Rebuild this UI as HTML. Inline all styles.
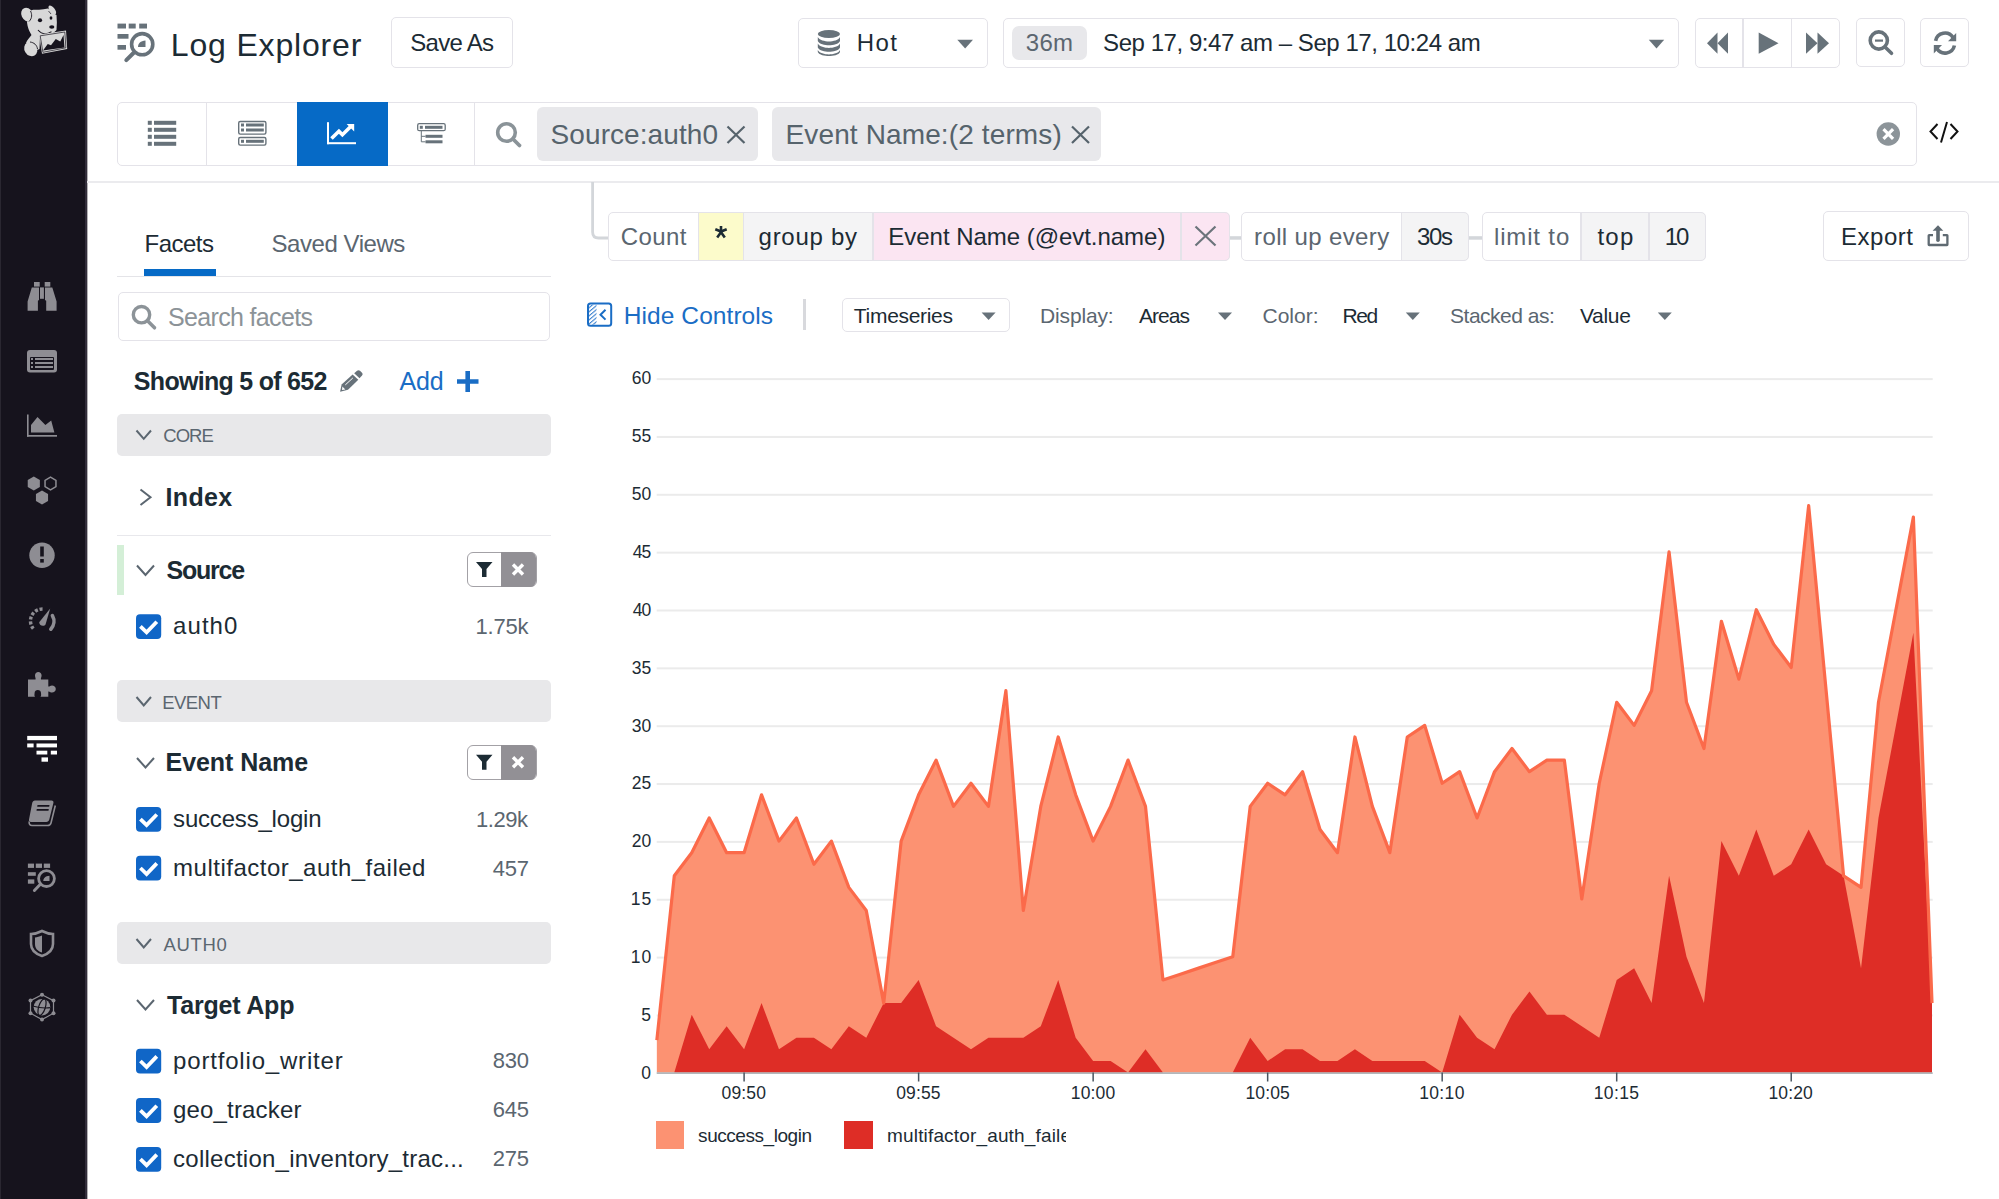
<!DOCTYPE html><html><head><meta charset="utf-8"><style>
html,body{margin:0;padding:0;}
body{width:1999px;height:1199px;position:relative;overflow:hidden;background:#fff;font-family:"Liberation Sans",sans-serif;}
.t{position:absolute;white-space:nowrap;}
.b{position:absolute;box-sizing:border-box;}
</style></head><body>
<div class="b" style="left:0px;top:0px;width:87px;height:1199px;background:#16131d;"></div>
<div class="b" style="left:85px;top:0px;width:2px;height:1199px;background:#322d3a;"></div>
<div class="b" style="left:87px;top:0px;width:1px;height:1199px;background:#b4b3b6;"></div>
<div class="b" style="left:0px;top:0px;width:1px;height:1199px;background:#2a2731;"></div>
<svg class="b" style="left:0;top:0" width="87" height="1199" viewBox="0 0 87 1199">
<g fill="#d8d8d8">
<path d="M31,10.5 C34,9.5 36,10 39,9.8 C42,9.5 45,9 48,8.5 C50,10 52,12 55.5,14.5 L56.5,15 C57,20 57,25 56.5,30 C55,32 53,33 50,34 L40,36 L39.5,49 C38,50 37,50 36,49 C34,45 30,43 26,43 C27,40 30,37 31.5,35 C29,31 27.5,27 27,22.5 C28,18 29,14 31,10.5 Z"/>
<ellipse cx="27" cy="14.5" rx="5.6" ry="7" transform="rotate(-25 27 14.5)"/>
<ellipse cx="52.3" cy="10" rx="2.6" ry="5.3" transform="rotate(-38 52.3 10)"/>
<ellipse cx="30.8" cy="49" rx="6.3" ry="7.5" transform="rotate(-30 30.8 49)"/>
</g>
<path d="M30.5,11 C32,14 32.5,18 29,21.5" stroke="#16131d" stroke-width="0.9" fill="none"/>
<path d="M48.5,11 L51,14" stroke="#16131d" stroke-width="0.7" fill="none"/>
<path d="M30,42 C34,42.5 37,45 37.5,49" stroke="#16131d" stroke-width="0.9" fill="none"/>
<ellipse cx="40" cy="20.3" rx="2.1" ry="2" fill="#16131d"/>
<ellipse cx="51" cy="18" rx="1.4" ry="1.7" fill="#16131d"/>
<ellipse cx="51.8" cy="27" rx="2.6" ry="1.7" fill="#16131d"/>
<path d="M38,30 C41,33.5 46,35 51.5,31.8" stroke="#16131d" stroke-width="1.1" fill="none"/>
<path d="M39,34.5 L66,30.5 L67.2,49 L42,53.8 Z" fill="#d8d8d8"/>
<path d="M40.2,35.8 L64.8,32 L65.9,47.8 L42.9,52.3 Z" fill="none" stroke="#16131d" stroke-width="0.7"/>
<path d="M43,50.5 L47.75,44 L51,45.25 L55.75,39 L60.25,41.5 L63.5,35 L64.5,47.5 Z" fill="#16131d"/>

<g fill="#8e8d93">
<rect x="34" y="282" width="5.7" height="4.6"/><rect x="44.7" y="282" width="5.6" height="4.6"/>
<path d="M31.8,287.4 L39,287.4 L39,300 L37.9,300.8 L37.9,310.8 L27.6,310.8 L27.6,301.5 Z"/>
<path d="M45,287.4 L52.3,287.4 L56.6,301.5 L56.6,310.8 L46.2,310.8 L46.2,300.8 L45,300 Z"/>
<rect x="40" y="287.4" width="3.9" height="11.4"/>
</g>
<rect x="27" y="350" width="30" height="22.5" rx="3" fill="#8e8d93"/>
<g fill="#16131d"><rect x="30" y="357" width="24" height="13" rx="1"/></g>
<g fill="#8e8d93"><rect x="31" y="358" width="2" height="2"/><rect x="31" y="362" width="2" height="2"/><rect x="31" y="366" width="2" height="2"/>
<rect x="35" y="358" width="18" height="2"/><rect x="35" y="362" width="18" height="2"/><rect x="35" y="366" width="18" height="2"/></g>
<g fill="#8e8d93"><rect x="27" y="414.5" width="1.6" height="22.2"/><rect x="27" y="435" width="30" height="1.7"/>
<path d="M31,432.6 L31,425 L37.5,417 L45.4,425 L51.2,420.4 L54.4,432.6 Z"/></g>
<polygon points="39.86,487.00 33.80,490.50 27.74,487.00 27.74,480.00 33.80,476.50 39.86,480.00" fill="#8e8d93"/>
<polygon points="48.06,501.00 42.00,504.50 35.94,501.00 35.94,494.00 42.00,490.50 48.06,494.00" fill="#8e8d93"/>
<polygon points="55.96,486.65 50.50,489.80 45.04,486.65 45.04,480.35 50.50,477.20 55.96,480.35" fill="none" stroke="#8e8d93" stroke-width="1.5"/>
<circle cx="42" cy="555.2" r="12.7" fill="#8e8d93"/><rect x="40.2" y="546.5" width="3.6" height="10" fill="#16131d"/><rect x="40.2" y="559" width="3.6" height="3.6" fill="#16131d"/>
<path d="M33.3,628.7 A12,12 0 0 1 43.5,609" fill="none" stroke="#8e8d93" stroke-width="3.4" stroke-dasharray="3 1.8"/>
<path d="M52.4,615.6 A11.5,11.5 0 0 1 50.8,629.2" fill="none" stroke="#8e8d93" stroke-width="3.6" stroke-linecap="round"/>
<path d="M39.2,622.3 L50.2,608.4 L45.6,624.2 C44.6,626.8 39.2,626.3 39.2,622.3 Z" fill="#8e8d93"/>
<path fill="#8e8d93" d="M28,679.5 L35.5,679.5 C36,678 35,677.5 35,675.5 C35,673.5 36.5,672 38.3,672 C40.1,672 41.6,673.5 41.6,675.5 C41.6,677.5 40.5,678 41,679.5 L48.3,679.5 L48.3,686.5 C49.5,687 50,685.5 52,685.5 C54,685.5 55.8,687 55.8,689 C55.8,691 54,692.5 52,692.5 C50,692.5 49.5,691 48.3,691.5 L48.3,696.7 L40.5,696.7 C41.5,695.5 41,694.5 41,693 C41,691.3 39.6,690 37.8,690 C36,690 34.6,691.3 34.6,693 C34.6,694.5 34,695.5 35,696.7 L28,696.7 Z"/>
<g fill="#ffffff"><rect x="27.2" y="735.9" width="29.8" height="4.3"/>
<rect x="27.2" y="743.5" width="6.4" height="3.9"/><rect x="36.5" y="743.5" width="20.5" height="3.9"/>
<rect x="36.5" y="750.7" width="10.8" height="3.8"/><rect x="50.8" y="750.7" width="6.2" height="3.8"/>
<rect x="41.5" y="757.4" width="6.5" height="4.3"/></g>
<path fill="#8e8d93" d="M35,800.5 L51.5,800.5 C53,800.5 53.8,801.5 53.4,803 L49.3,819.5 C48.9,821 47.8,822 46.3,822 L31,822 C29.5,822 28.6,821 29,819.5 L32.2,803 C32.6,801.5 33.5,800.5 35,800.5 Z"/>
<path d="M29.2,821.5 C28.8,824 30,825.5 32,825.5 L47.5,825.5 C49.5,825.5 50.6,824.5 51,823 L55.3,805.5" fill="none" stroke="#8e8d93" stroke-width="1.6"/>
<rect x="37.3" y="805" width="12" height="1.7" fill="#16131d" transform="skewX(-10)" transform-origin="43 806"/><rect x="36.6" y="809" width="12" height="1.7" fill="#16131d" transform="skewX(-10)" transform-origin="42.6 810"/>
<g fill="#8e8d93"><rect x="27.9" y="863.6" width="6.1" height="4.3"/><rect x="35.8" y="863.6" width="6.2" height="4.3"/><rect x="43.8" y="863.6" width="6.3" height="4.3"/>
<rect x="27.9" y="872.2" width="7.9" height="3.6"/><rect x="27.9" y="879.4" width="6.4" height="4.3"/></g>
<circle cx="46.5" cy="878.6" r="7.9" fill="none" stroke="#8e8d93" stroke-width="2.8"/>
<path d="M40.6,884 L34.4,890.5" stroke="#8e8d93" stroke-width="3" stroke-linecap="round"/>
<path d="M43.3,881 C43.3,878.2 45.3,876 49.5,875.7 L49.5,881 Z" fill="#8e8d93"/>
<path d="M42,931 C38,933 34,934 31,934 L31,944 C31,950 36,954 42,956 C48,954 53,950 53,944 L53,934 C50,934 46,933 42,931 Z" fill="none" stroke="#8e8d93" stroke-width="2.6"/>
<path d="M42,935.5 C39.5,936.5 37,937.3 35,937.5 L35,944 C35,948.5 37.5,951 42,952.6 Z" fill="#8e8d93"/>
<polygon points="42,994.7 53.5,1000.6 53.5,1013.2 42,1019.6 30.5,1013.2 30.5,1000.6" fill="none" stroke="#8e8d93" stroke-width="1.2"/>
<g fill="#8e8d93"><circle cx="42" cy="994.7" r="2"/><circle cx="42" cy="1019.6" r="2"/><circle cx="30.5" cy="1000.6" r="2"/><circle cx="53.5" cy="1000.6" r="2"/><circle cx="30.5" cy="1013.2" r="2"/><circle cx="53.5" cy="1013.2" r="2"/></g>
<circle cx="42" cy="1007.2" r="9.9" fill="#16131d"/>
<circle cx="42" cy="1007.2" r="8.3" fill="#8e8d93"/>
<ellipse cx="42" cy="1007.2" rx="3.3" ry="8.6" fill="none" stroke="#16131d" stroke-width="1.2" transform="rotate(18 42 1007.2)"/>
<path d="M33.5,1006.2 Q42,1008.8 50.5,1007.6" fill="none" stroke="#16131d" stroke-width="1.2"/>
</svg>
<svg class="b" style="left:0;top:0" width="200" height="80" viewBox="0 0 200 80">
<g fill="#67727a"><rect x="117.5" y="23.6" width="8.5" height="4.9"/><rect x="128.7" y="23.6" width="7" height="4.9"/><rect x="139.2" y="23.6" width="7.8" height="4.9"/>
<rect x="117.5" y="34" width="11" height="4.7"/><rect x="117.5" y="45" width="8.5" height="4.7"/></g>
<circle cx="142.2" cy="44.2" r="10.6" fill="none" stroke="#67727a" stroke-width="3.6"/>
<path d="M133.5,53 L126.3,60.2" stroke="#67727a" stroke-width="4" stroke-linecap="round"/>
<path d="M138,47 C138,43.5 140.5,41 145.5,40.6 L145.5,47 Z" fill="#67727a"/>
</svg>
<div class="t" style="left:170.82px;top:28.51px;font-size:32px;line-height:32px;color:#1c2b34;letter-spacing:0.829px;">Log Explorer</div>
<div class="b" style="left:391px;top:17.4px;width:122.3px;height:50.2px;border:1.5px solid #e4e3e9;border-radius:5px;"></div>
<div class="t" style="left:410.34px;top:31.38px;font-size:24px;line-height:24px;color:#1c2b34;letter-spacing:-0.733px;">Save As</div>
<div class="b" style="left:798.3px;top:17.5px;width:189.8px;height:50px;border:1.5px solid #e4e3e9;border-radius:5px;"></div>
<svg class="b" style="left:810px;top:25px" width="40" height="36" viewBox="810 25 40 36">
<g fill="#67727a">
<ellipse cx="828.9" cy="34" rx="11.1" ry="4"/>
<path d="M817.8,37 C819,40 825,41.5 828.9,41.5 C833,41.5 839,40 840,37 L840,41 C839,44 833,45.3 828.9,45.3 C825,45.3 819,44 817.8,41 Z"/>
<path d="M817.8,43.6 C819,46.6 825,48 828.9,48 C833,48 839,46.6 840,43.6 L840,47.5 C839,50.5 833,51.8 828.9,51.8 C825,51.8 819,50.5 817.8,47.5 Z"/>
<path d="M817.8,50 C819,53 825,54.4 828.9,54.4 C833,54.4 839,53 840,50 L840,52 C839,55 833,56 828.9,56 C825,56 819,55 817.8,52 Z"/>
</g></svg>
<div class="t" style="left:856.82px;top:31.48px;font-size:24px;line-height:24px;color:#1c2b34;letter-spacing:1.430px;">Hot</div>
<svg class="b" style="left:950px;top:35px" width="30" height="20" viewBox="950 35 30 20"><path d="M957.3,39.7 L973,39.7 L965.15,48.5 Z" fill="#67727a"/></svg>
<div class="b" style="left:1003.3px;top:17.5px;width:676.1px;height:50px;border:1.5px solid #e4e3e9;border-radius:5px;"></div>
<div class="b" style="left:1012.3px;top:26px;width:74.6px;height:34.3px;background:#e8e8eb;border-radius:7px;"></div>
<div class="t" style="left:1025.86px;top:31.48px;font-size:24px;line-height:24px;color:#5b6670;letter-spacing:0.180px;">36m</div>
<div class="t" style="left:1103.10px;top:31.48px;font-size:24px;line-height:24px;color:#1c2b34;letter-spacing:-0.446px;">Sep 17, 9:47 am – Sep 17, 10:24 am</div>
<svg class="b" style="left:1640px;top:35px" width="30" height="20" viewBox="1640 35 30 20"><path d="M1648.8,39.7 L1664.2,39.7 L1656.5,48.5 Z" fill="#67727a"/></svg>
<div class="b" style="left:1694.5px;top:17.5px;width:145.6px;height:50px;border:1.5px solid #e4e3e9;border-radius:5px;"></div>
<div class="b" style="left:1742.2px;top:17.5px;width:1.8px;height:50px;background:#e4e3e9;"></div>
<div class="b" style="left:1790.6px;top:17.5px;width:1.8px;height:50px;background:#e4e3e9;"></div>
<svg class="b" style="left:1690px;top:20px" width="300" height="45" viewBox="1690 20 300 45">
<g fill="#67727a">
<path d="M1707,43.2 L1717.5,32.6 L1717.5,53.7 Z"/><path d="M1717.5,43.2 L1728,32.6 L1728,53.7 Z"/>
<path d="M1758.7,32.6 L1778.5,43.2 L1758.7,53.7 Z"/>
<path d="M1806,32.6 L1817.5,43.2 L1806,53.7 Z"/><path d="M1817.5,32.6 L1829,43.2 L1817.5,53.7 Z"/>
</g>
<circle cx="1878.8" cy="40.5" r="8.6" fill="none" stroke="#67727a" stroke-width="3.6"/>
<path d="M1875,40.6 L1883,40.6" stroke="#67727a" stroke-width="2.2"/>
<path d="M1885,47 L1891.5,53.3" stroke="#67727a" stroke-width="3.6" stroke-linecap="round"/>
<path d="M1935.6,40.8 A9.5,9.5 0 0 1 1953,37.5" fill="none" stroke="#67727a" stroke-width="3.6"/>
<path d="M1956.2,33 L1956.2,41.3 L1948,41.3 Z" fill="#67727a"/>
<path d="M1954.4,45.5 A9.5,9.5 0 0 1 1937,48.5" fill="none" stroke="#67727a" stroke-width="3.6"/>
<path d="M1933.8,53.5 L1933.8,45 L1942,45 Z" fill="#67727a"/>
</svg>
<div class="b" style="left:1855.8px;top:17.6px;width:49.4px;height:49.9px;border:1.5px solid #e4e3e9;border-radius:5px;"></div>
<div class="b" style="left:1920.3px;top:17.6px;width:49px;height:49.9px;border:1.5px solid #e4e3e9;border-radius:5px;"></div>
<div class="b" style="left:117.2px;top:101.8px;width:1800.3px;height:63.9px;border:1.5px solid #e4e3e9;border-radius:5px;"></div>
<div class="b" style="left:205.6px;top:101.8px;width:1.8px;height:63.9px;background:#e4e3e9;"></div>
<div class="b" style="left:296.5px;top:101.8px;width:91.2px;height:63.9px;background:#066ac6;"></div>
<div class="b" style="left:473.6px;top:101.8px;width:1.8px;height:63.9px;background:#e4e3e9;"></div>
<svg class="b" style="left:140px;top:110px" width="400" height="45" viewBox="140 110 400 45">
<g fill="#67727a">
<rect x="147.8" y="120.8" width="4" height="4"/><rect x="154" y="120.8" width="22.2" height="4"/>
<rect x="147.8" y="127.8" width="4" height="4"/><rect x="154" y="127.8" width="22.2" height="4"/>
<rect x="147.8" y="134.8" width="4" height="4"/><rect x="154" y="134.8" width="22.2" height="4"/>
<rect x="147.8" y="141.8" width="4" height="4"/><rect x="154" y="141.8" width="22.2" height="4"/>
</g>
<rect x="238.7" y="121.5" width="27.2" height="12.6" rx="1.5" fill="none" stroke="#67727a" stroke-width="1.4"/>
<rect x="238.7" y="137.5" width="27.2" height="7.6" rx="1.5" fill="none" stroke="#67727a" stroke-width="1.4"/>
<g fill="#67727a"><rect x="241" y="123.5" width="3" height="3"/><rect x="246" y="123.5" width="17.8" height="3"/>
<rect x="241" y="128.5" width="3" height="3"/><rect x="246" y="128.5" width="17.8" height="3"/>
<rect x="241" y="139.8" width="3" height="3"/><rect x="246" y="139.8" width="17.8" height="3"/></g>
<g fill="#fff"><rect x="327" y="122.2" width="2" height="22"/><rect x="327" y="142.2" width="29" height="2"/>
</g><path d="M331.5,138.6 L338.9,131.2 L342.4,134.8 L350.5,126.8" fill="none" stroke="#fff" stroke-width="3.6"/><path d="M346.6,124 L354.2,124 L354.2,131.6 Z" fill="#fff"/>
<rect x="417.7" y="123.7" width="27.5" height="7" rx="1.5" fill="none" stroke="#67727a" stroke-width="1.3"/>
<g fill="#67727a"><rect x="419.8" y="125.8" width="3" height="3"/><rect x="425" y="125.8" width="17.5" height="3"/>
<rect x="425.5" y="134.8" width="17" height="3"/><rect x="425.5" y="140.3" width="17" height="3"/></g>
<path d="M421.3,131 L421.3,141.8 L425.5,141.8 M421.3,136.3 L425.5,136.3" fill="none" stroke="#67727a" stroke-width="1"/>
<circle cx="506.5" cy="132.5" r="8.8" fill="none" stroke="#8a9398" stroke-width="3.6"/>
<path d="M513,139 L519.5,145.5" stroke="#8a9398" stroke-width="3.8" stroke-linecap="round"/>
</svg>
<div class="b" style="left:536.5px;top:106.7px;width:221.4px;height:54px;background:#e8e8eb;border-radius:6px;"></div>
<div class="t" style="left:550.60px;top:120.60px;font-size:28px;line-height:28px;color:#56636c;letter-spacing:0.075px;">Source:auth0</div>
<div class="b" style="left:772.2px;top:106.7px;width:329.1px;height:54px;background:#e8e8eb;border-radius:6px;"></div>
<div class="t" style="left:785.56px;top:120.60px;font-size:28px;line-height:28px;color:#56636c;letter-spacing:0.125px;">Event Name:(2 terms)</div>
<svg class="b" style="left:700px;top:110px" width="1300" height="45" viewBox="700 110 1300 45">
<path d="M727.5,126.5 L744.5,143 M744.5,126.5 L727.5,143" stroke="#56636c" stroke-width="2.2"/>
<path d="M1072,126.5 L1089,143 M1089,126.5 L1072,143" stroke="#56636c" stroke-width="2.2"/>
<circle cx="1888.3" cy="134" r="11.7" fill="#8c9499"/>
<path d="M1883.5,129.2 L1893.1,138.8 M1893.1,129.2 L1883.5,138.8" stroke="#fff" stroke-width="3.2"/>
<path d="M1937.5,124 L1930.5,131.5 L1937.5,139 M1950.5,124 L1957.5,131.5 L1950.5,139 M1947,122 L1941,142.5" fill="none" stroke="#111" stroke-width="2"/>
</svg>
<div class="b" style="left:87px;top:180.8px;width:1912px;height:1.9px;background:#ebebee;"></div>
<div class="t" style="left:144.58px;top:231.58px;font-size:24px;line-height:24px;color:#1c2b34;letter-spacing:-0.540px;">Facets</div>
<div class="t" style="left:271.48px;top:231.58px;font-size:24px;line-height:24px;color:#5b6670;letter-spacing:-0.446px;">Saved Views</div>
<div class="b" style="left:117px;top:275.5px;width:433.7px;height:1.6px;background:#e4e4e8;"></div>
<div class="b" style="left:143.8px;top:269.2px;width:72.3px;height:6.8px;background:#066ac6;"></div>
<div class="b" style="left:117.6px;top:291.6px;width:432.8px;height:49.6px;border:1.5px solid #e4e3e9;border-radius:5px;"></div>
<div class="t" style="left:167.98px;top:304.94px;font-size:25px;line-height:25px;color:#8c9398;letter-spacing:-0.655px;">Search facets</div>
<div class="t" style="left:133.86px;top:369.34px;font-size:25px;line-height:25px;color:#1c2b34;font-weight:bold;letter-spacing:-0.714px;">Showing 5 of 652</div>
<div class="t" style="left:399.62px;top:369.34px;font-size:25px;line-height:25px;color:#1a6dc5;letter-spacing:-0.170px;">Add</div>
<div class="b" style="left:117px;top:413.5px;width:433.7px;height:42.6px;background:#e8e8ea;border-radius:5px;"></div>
<div class="t" style="left:163.24px;top:427.44px;font-size:18.5px;line-height:18.5px;color:#5b6670;letter-spacing:-0.942px;">CORE</div>
<div class="t" style="left:165.58px;top:484.84px;font-size:25px;line-height:25px;color:#1c2b34;font-weight:bold;letter-spacing:0.292px;">Index</div>
<div class="b" style="left:117px;top:534.6px;width:433.7px;height:1.8px;background:#e8e8ec;"></div>
<div class="b" style="left:117px;top:544.5px;width:7px;height:50.1px;background:#d4efd7;"></div>
<div class="t" style="left:166.48px;top:557.74px;font-size:25px;line-height:25px;color:#1c2b34;font-weight:bold;letter-spacing:-1.218px;">Source</div>
<div class="b" style="left:466.7px;top:552px;width:70px;height:35.1px;border:1.5px solid #a3a1a6;border-radius:6px;background:#fff;"></div>
<div class="b" style="left:500.6px;top:552px;width:35.7px;height:35.1px;background:#929095;border-radius:0 6px 6px 0;"></div>
<div class="t" style="left:173.10px;top:613.88px;font-size:24px;line-height:24px;color:#1c2b34;letter-spacing:1.045px;">auth0</div>
<div class="t" style="left:475.58px;top:615.58px;font-size:22px;line-height:22px;color:#5b6670;letter-spacing:-0.215px;">1.75k</div>
<div class="b" style="left:117px;top:680.2px;width:433.7px;height:42.3px;background:#e8e8ea;border-radius:5px;"></div>
<div class="t" style="left:162.34px;top:694.34px;font-size:18.5px;line-height:18.5px;color:#5b6670;letter-spacing:-0.574px;">EVENT</div>
<div class="t" style="left:165.58px;top:750.44px;font-size:25px;line-height:25px;color:#1c2b34;font-weight:bold;letter-spacing:-0.063px;">Event Name</div>
<div class="b" style="left:466.7px;top:744.7px;width:70px;height:35.3px;border:1.5px solid #a3a1a6;border-radius:6px;background:#fff;"></div>
<div class="b" style="left:500.6px;top:744.7px;width:35.7px;height:35.3px;background:#929095;border-radius:0 6px 6px 0;"></div>
<div class="t" style="left:173.10px;top:806.98px;font-size:24px;line-height:24px;color:#1c2b34;letter-spacing:-0.192px;">success_login</div>
<div class="t" style="left:476.10px;top:808.68px;font-size:22px;line-height:22px;color:#5b6670;letter-spacing:-0.470px;">1.29k</div>
<div class="t" style="left:173.10px;top:855.88px;font-size:24px;line-height:24px;color:#1c2b34;letter-spacing:0.494px;">multifactor_auth_failed</div>
<div class="t" style="left:492.86px;top:857.58px;font-size:22px;line-height:22px;color:#5b6670;letter-spacing:-0.290px;">457</div>
<div class="b" style="left:117px;top:921.9px;width:433.7px;height:42.2px;background:#e8e8ea;border-radius:5px;"></div>
<div class="t" style="left:163.38px;top:935.84px;font-size:18.5px;line-height:18.5px;color:#5b6670;letter-spacing:0.675px;">AUTH0</div>
<div class="t" style="left:167.00px;top:992.74px;font-size:25px;line-height:25px;color:#1c2b34;font-weight:bold;letter-spacing:-0.192px;">Target App</div>
<div class="t" style="left:173.10px;top:1048.68px;font-size:24px;line-height:24px;color:#1c2b34;letter-spacing:0.815px;">portfolio_writer</div>
<div class="t" style="left:492.86px;top:1050.38px;font-size:22px;line-height:22px;color:#5b6670;letter-spacing:-0.290px;">830</div>
<div class="t" style="left:173.10px;top:1097.68px;font-size:24px;line-height:24px;color:#1c2b34;letter-spacing:0.156px;">geo_tracker</div>
<div class="t" style="left:492.86px;top:1099.38px;font-size:22px;line-height:22px;color:#5b6670;letter-spacing:-0.290px;">645</div>
<div class="t" style="left:173.10px;top:1146.68px;font-size:24px;line-height:24px;color:#1c2b34;letter-spacing:0.242px;">collection_inventory_trac...</div>
<div class="t" style="left:492.86px;top:1148.38px;font-size:22px;line-height:22px;color:#5b6670;letter-spacing:-0.290px;">275</div>
<svg class="b" style="left:0;top:0" width="600" height="1199" viewBox="0 0 600 1199">
<circle cx="141.5" cy="314.7" r="8.2" fill="none" stroke="#8c9398" stroke-width="3.4"/><path d="M147.5,320.8 L154.5,327.8" stroke="#8c9398" stroke-width="3.6" stroke-linecap="round"/>
<path d="M340.1,391.8 L341.6,384.6 L352.6,374.6 L358.3,379.8 L348,389.8 Z" fill="#67727a"/><path d="M354.2,373.3 L357,370.8 C358,370 359,370 360,370.8 L362,372.7 C362.8,373.6 362.8,374.6 362,375.5 L359.5,378.2 Z" fill="#67727a"/><path d="M345.3,384.9 L352.8,378" stroke="#fff" stroke-width="1"/><path d="M342.4,386.4 L342,390 L345.3,389.6 Z" fill="#fff"/>
<path d="M467.7,371 L467.7,392 M457,381.5 L478.5,381.5" stroke="#1a6dc5" stroke-width="4.6"/>
<path d="M136.5,430.5 L143.75,438.8 L151,430.5" fill="none" stroke="#5b6670" stroke-width="2"/>
<path d="M140.5,489.5 L150.5,497.3 L140.5,505" fill="none" stroke="#5b6670" stroke-width="2"/>
<path d="M137,565.5 L145.5,575 L154,565.5" fill="none" stroke="#5b6670" stroke-width="2"/>
<path d="M136.5,697 L143.75,705.5 L151,697" fill="none" stroke="#5b6670" stroke-width="2"/>
<path d="M137,758 L145.5,767.5 L154,758" fill="none" stroke="#5b6670" stroke-width="2"/>
<path d="M136.5,939 L143.75,947.5 L151,939" fill="none" stroke="#5b6670" stroke-width="2"/>
<path d="M137,1000 L145.5,1009.5 L154,1000" fill="none" stroke="#5b6670" stroke-width="2"/>
<path d="M476,562.0 L492.5,562.0 L486.5,569.0 L486.5,577.0 L482,577.0 L482,569.0 Z" fill="#1c2b34"/>
<path d="M513,564.5 L523,574.5 M523,564.5 L513,574.5" stroke="#fff" stroke-width="3.4"/>
<path d="M476,754.8 L492.5,754.8 L486.5,761.8 L486.5,769.8 L482,769.8 L482,761.8 Z" fill="#1c2b34"/>
<path d="M513,757.3 L523,767.3 M523,757.3 L513,767.3" stroke="#fff" stroke-width="3.4"/>
<rect x="136.0" y="614.2" width="25.2" height="24.8" rx="4" fill="#1066c7"/><path d="M140.4,626.4 L146.6,632.4 L156.8,621.8" fill="none" stroke="#fff" stroke-width="3.8"/>
<rect x="136.0" y="806.9" width="25.2" height="24.8" rx="4" fill="#1066c7"/><path d="M140.4,819.1 L146.6,825.1 L156.8,814.5" fill="none" stroke="#fff" stroke-width="3.8"/>
<rect x="136.0" y="855.8" width="25.2" height="24.8" rx="4" fill="#1066c7"/><path d="M140.4,868.0 L146.6,874.0 L156.8,863.4" fill="none" stroke="#fff" stroke-width="3.8"/>
<rect x="136.0" y="1048.8" width="25.2" height="24.8" rx="4" fill="#1066c7"/><path d="M140.4,1061.0 L146.6,1067.0 L156.8,1056.4" fill="none" stroke="#fff" stroke-width="3.8"/>
<rect x="136.0" y="1098.1" width="25.2" height="24.8" rx="4" fill="#1066c7"/><path d="M140.4,1110.3 L146.6,1116.3 L156.8,1105.7" fill="none" stroke="#fff" stroke-width="3.8"/>
<rect x="136.0" y="1147.0" width="25.2" height="24.8" rx="4" fill="#1066c7"/><path d="M140.4,1159.2 L146.6,1165.2 L156.8,1154.6" fill="none" stroke="#fff" stroke-width="3.8"/>
</svg>
<svg class="b" style="left:0;top:0" width="1999" height="400" viewBox="0 0 1999 400">
<path d="M592.6,182 L592.6,232 Q592.6,238 598.6,238 L609,238" fill="none" stroke="#d3d6da" stroke-width="2.8"/>
<rect x="1229" y="236.2" width="13" height="3.5" fill="#d3d6da"/>
<rect x="1468" y="236.2" width="14" height="3.5" fill="#d3d6da"/>
</svg>
<div class="b" style="left:608.3px;top:211.5px;width:621.9px;height:49.5px;background:#fff;border-radius:7px;"></div>
<div class="b" style="left:698.3px;top:211.5px;width:45.5px;height:49.5px;background:#fcfbcb;"></div>
<div class="b" style="left:743.3px;top:211.5px;width:130px;height:49.5px;background:#f4f4f5;"></div>
<div class="b" style="left:873px;top:211.5px;width:357.2px;height:49.5px;background:#fbe5f2;border-radius:0 5px 5px 0;"></div>
<div class="b" style="left:608.3px;top:211.5px;width:621.9px;height:49.5px;border:1.5px solid #e4e3e9;border-radius:5px;"></div>
<div class="b" style="left:697.5px;top:211.5px;width:1.8px;height:49.5px;background:#e4e3e9;"></div>
<div class="b" style="left:742.5px;top:211.5px;width:1.8px;height:49.5px;background:#e4e3e9;"></div>
<div class="b" style="left:872.2px;top:211.5px;width:1.8px;height:49.5px;background:#e4e3e9;"></div>
<div class="b" style="left:1180px;top:211.5px;width:1.8px;height:49.5px;background:#e4e3e9;"></div>
<div class="t" style="left:620.72px;top:225.18px;font-size:24px;line-height:24px;color:#5b6670;letter-spacing:0.425px;">Count</div>
<div class="t" style="left:758.60px;top:225.18px;font-size:24px;line-height:24px;color:#1c2b34;letter-spacing:0.720px;">group by</div>
<div class="t" style="left:888.34px;top:225.18px;font-size:24px;line-height:24px;color:#1c2b34;letter-spacing:-0.035px;">Event Name (@evt.name)</div>
<div class="b" style="left:1401.4px;top:211.5px;width:67.9px;height:49.5px;background:#f4f4f5;border-radius:0 5px 5px 0;"></div>
<div class="b" style="left:1241.4px;top:211.5px;width:227.9px;height:49.5px;border:1.5px solid #e4e3e9;border-radius:5px;"></div>
<div class="b" style="left:1400.6px;top:211.5px;width:1.8px;height:49.5px;background:#e4e3e9;"></div>
<div class="t" style="left:1254.10px;top:225.18px;font-size:24px;line-height:24px;color:#5b6670;letter-spacing:0.362px;">roll up every</div>
<div class="t" style="left:1417.12px;top:225.18px;font-size:24px;line-height:24px;color:#1c2b34;letter-spacing:-1.440px;">30s</div>
<div class="b" style="left:1581.2px;top:211.5px;width:124.8px;height:49.5px;background:#f4f4f5;border-radius:0 5px 5px 0;"></div>
<div class="b" style="left:1481.7px;top:211.5px;width:224.3px;height:49.5px;border:1.5px solid #e4e3e9;border-radius:5px;"></div>
<div class="b" style="left:1580.4px;top:211.5px;width:1.8px;height:49.5px;background:#e4e3e9;"></div>
<div class="b" style="left:1648.4px;top:211.5px;width:1.8px;height:49.5px;background:#e4e3e9;"></div>
<div class="t" style="left:1493.98px;top:225.18px;font-size:24px;line-height:24px;color:#5b6670;letter-spacing:0.846px;">limit to</div>
<div class="t" style="left:1597.50px;top:225.18px;font-size:24px;line-height:24px;color:#1c2b34;letter-spacing:1.200px;">top</div>
<div class="t" style="left:1664.72px;top:225.18px;font-size:24px;line-height:24px;color:#1c2b34;letter-spacing:-1.980px;">10</div>
<div class="b" style="left:1822.7px;top:211.2px;width:146.7px;height:49.9px;border:1.5px solid #e4e3e9;border-radius:5px;"></div>
<div class="t" style="left:1841.08px;top:225.18px;font-size:24px;line-height:24px;color:#1c2b34;letter-spacing:0.484px;">Export</div>
<div class="b" style="left:803.1px;top:299.1px;width:2.8px;height:30.9px;background:#d8d9dd;"></div>
<div class="b" style="left:842.4px;top:297.6px;width:167.2px;height:34.8px;border:1.6px solid #e4e3e9;border-radius:5px;"></div>
<div class="t" style="left:623.84px;top:303.76px;font-size:24.5px;line-height:24.5px;color:#1a6dc5;letter-spacing:0.069px;">Hide Controls</div>
<div class="t" style="left:853.86px;top:304.72px;font-size:21px;line-height:21px;color:#1c2b34;letter-spacing:-0.313px;">Timeseries</div>
<div class="t" style="left:1040.10px;top:304.72px;font-size:21px;line-height:21px;color:#5b6670;letter-spacing:-0.156px;">Display:</div>
<div class="t" style="left:1139.00px;top:304.72px;font-size:21px;line-height:21px;color:#1c2b34;letter-spacing:-0.952px;">Areas</div>
<div class="t" style="left:1262.48px;top:304.72px;font-size:21px;line-height:21px;color:#5b6670;">Color:</div>
<div class="t" style="left:1342.46px;top:304.72px;font-size:21px;line-height:21px;color:#1c2b34;letter-spacing:-1.367px;">Red</div>
<div class="t" style="left:1450.10px;top:304.72px;font-size:21px;line-height:21px;color:#5b6670;letter-spacing:-0.504px;">Stacked as:</div>
<div class="t" style="left:1579.88px;top:304.72px;font-size:21px;line-height:21px;color:#1c2b34;letter-spacing:-0.291px;">Value</div>
<svg class="b" style="left:0;top:0" width="1999" height="400" viewBox="0 0 1999 400">
<g stroke="#1c2b34" stroke-width="2.6" stroke-linecap="butt"><path d="M721,226 L721,233"/><path d="M715.3,229.2 L721,231.5 L726.7,229.2" fill="none"/><path d="M717.2,237.5 L721,232.2 L724.8,237.5" fill="none"/></g>
<path d="M1195.5,226.5 L1215.5,245.5 M1215.5,226.5 L1195.5,245.5" stroke="#6b747b" stroke-width="2.2"/>
<path d="M1933,235.1 L1929.2,235.1 Q1928.7,235.1 1928.7,235.6 L1928.7,244.6 Q1928.7,245 1929.2,245 L1947,245 Q1947.4,245 1947.4,244.6 L1947.4,235.6 Q1947.4,235.1 1947,235.1 L1942.8,235.1" fill="none" stroke="#5f6a72" stroke-width="2.3"/>
<path d="M1938,240.2 L1938,230" stroke="#5f6a72" stroke-width="3.6" stroke-linecap="round"/><path d="M1932.6,230.8 L1938,225.2 L1943.3,230.8 Z" fill="#5f6a72"/>
<defs><pattern id="hatch" width="3.1" height="3.1" patternUnits="userSpaceOnUse" patternTransform="rotate(50)"><rect width="1.1" height="3.1" fill="#3c82cf"/></pattern></defs>
<rect x="588" y="303.6" width="23.2" height="22.1" rx="2.5" fill="none" stroke="#1a6dc5" stroke-width="2"/>
<rect x="589" y="304.6" width="7.5" height="20.1" fill="url(#hatch)"/>
<path d="M605.5,309.8 L600.5,314.7 L605.5,319.6" fill="none" stroke="#1a6dc5" stroke-width="2"/>
<path d="M981.6,312.4 L995.6,312.4 L988.6,320 Z" fill="#67727a"/>
<path d="M1218,312.4 L1232,312.4 L1225,320 Z" fill="#67727a"/>
<path d="M1405.8,312.4 L1419.8,312.4 L1412.8,320 Z" fill="#67727a"/>
<path d="M1657.8,312.4 L1671.8,312.4 L1664.8,320 Z" fill="#67727a"/>
</svg>
<svg class="b" style="left:0;top:0" width="1999" height="1199" viewBox="0 0 1999 1199">
<rect x="656.7" y="1014.45" width="1276" height="2" fill="#ebebeb"/>
<rect x="656.7" y="956.60" width="1276" height="2" fill="#ebebeb"/>
<rect x="656.7" y="898.75" width="1276" height="2" fill="#ebebeb"/>
<rect x="656.7" y="840.90" width="1276" height="2" fill="#ebebeb"/>
<rect x="656.7" y="783.05" width="1276" height="2" fill="#ebebeb"/>
<rect x="656.7" y="725.20" width="1276" height="2" fill="#ebebeb"/>
<rect x="656.7" y="667.35" width="1276" height="2" fill="#ebebeb"/>
<rect x="656.7" y="609.50" width="1276" height="2" fill="#ebebeb"/>
<rect x="656.7" y="551.65" width="1276" height="2" fill="#ebebeb"/>
<rect x="656.7" y="493.80" width="1276" height="2" fill="#ebebeb"/>
<rect x="656.7" y="435.95" width="1276" height="2" fill="#ebebeb"/>
<rect x="656.7" y="378.10" width="1276" height="2" fill="#ebebeb"/>
<polygon points="656.84,1072.5 656.84,1040.10 674.29,875.81 691.74,852.67 709.20,817.96 726.65,852.67 744.10,852.67 761.55,794.82 779.00,841.10 796.46,817.96 813.91,864.24 831.36,841.10 848.81,887.38 866.26,910.52 883.72,1003.08 901.17,841.10 918.62,794.82 936.07,760.11 953.52,806.39 970.98,783.25 988.43,806.39 1005.88,690.69 1023.33,910.52 1040.78,806.39 1058.24,736.97 1075.69,794.82 1093.14,841.10 1110.59,806.39 1128.04,760.11 1145.50,806.39 1162.95,979.94 1180.40,974.15 1197.85,968.37 1215.30,962.59 1232.76,956.80 1250.21,806.39 1267.66,783.25 1285.11,794.82 1302.56,771.68 1320.02,829.53 1337.47,852.67 1354.92,736.97 1372.37,806.39 1389.82,852.67 1407.28,736.97 1424.73,725.40 1442.18,783.25 1459.63,771.68 1477.08,817.96 1494.54,771.68 1511.99,748.54 1529.44,771.68 1546.89,760.11 1564.34,760.11 1581.80,898.95 1599.25,783.25 1616.70,702.26 1634.15,725.40 1651.60,690.69 1669.06,551.85 1686.51,702.26 1703.96,748.54 1721.41,621.27 1738.86,679.12 1756.32,609.70 1773.77,644.41 1791.22,667.55 1808.67,505.57 1826.12,690.69 1843.58,875.81 1861.03,887.38 1878.48,702.26 1895.93,609.70 1913.38,517.14 1932.00,1003.08 1932.00,1072.5" fill="#fc9272"/>
<polygon points="656.84,1072.5 656.84,1072.50 674.29,1072.50 691.74,1014.65 709.20,1049.36 726.65,1026.22 744.10,1049.36 761.55,1003.08 779.00,1049.36 796.46,1037.79 813.91,1037.79 831.36,1049.36 848.81,1026.22 866.26,1037.79 883.72,1003.08 901.17,1003.08 918.62,979.94 936.07,1026.22 953.52,1037.79 970.98,1049.36 988.43,1037.79 1005.88,1037.79 1023.33,1037.79 1040.78,1026.22 1058.24,979.94 1075.69,1037.79 1093.14,1060.93 1110.59,1060.93 1128.04,1072.50 1145.50,1049.36 1162.95,1072.50 1180.40,1072.50 1197.85,1072.50 1215.30,1072.50 1232.76,1072.50 1250.21,1037.79 1267.66,1060.93 1285.11,1049.36 1302.56,1049.36 1320.02,1060.93 1337.47,1060.93 1354.92,1049.36 1372.37,1060.93 1389.82,1060.93 1407.28,1060.93 1424.73,1060.93 1442.18,1072.50 1459.63,1014.65 1477.08,1037.79 1494.54,1049.36 1511.99,1014.65 1529.44,991.51 1546.89,1014.65 1564.34,1014.65 1581.80,1026.22 1599.25,1037.79 1616.70,979.94 1634.15,968.37 1651.60,1003.08 1669.06,875.81 1686.51,956.80 1703.96,1003.08 1721.41,841.10 1738.86,875.81 1756.32,829.53 1773.77,875.81 1791.22,864.24 1808.67,829.53 1826.12,864.24 1843.58,875.81 1861.03,968.37 1878.48,817.96 1895.93,725.40 1913.38,632.84 1932.00,1003.08 1932.00,1072.5" fill="#de2d26"/>
<polyline points="656.84,1040.10 674.29,875.81 691.74,852.67 709.20,817.96 726.65,852.67 744.10,852.67 761.55,794.82 779.00,841.10 796.46,817.96 813.91,864.24 831.36,841.10 848.81,887.38 866.26,910.52 883.72,1003.08 901.17,841.10 918.62,794.82 936.07,760.11 953.52,806.39 970.98,783.25 988.43,806.39 1005.88,690.69 1023.33,910.52 1040.78,806.39 1058.24,736.97 1075.69,794.82 1093.14,841.10 1110.59,806.39 1128.04,760.11 1145.50,806.39 1162.95,979.94 1180.40,974.15 1197.85,968.37 1215.30,962.59 1232.76,956.80 1250.21,806.39 1267.66,783.25 1285.11,794.82 1302.56,771.68 1320.02,829.53 1337.47,852.67 1354.92,736.97 1372.37,806.39 1389.82,852.67 1407.28,736.97 1424.73,725.40 1442.18,783.25 1459.63,771.68 1477.08,817.96 1494.54,771.68 1511.99,748.54 1529.44,771.68 1546.89,760.11 1564.34,760.11 1581.80,898.95 1599.25,783.25 1616.70,702.26 1634.15,725.40 1651.60,690.69 1669.06,551.85 1686.51,702.26 1703.96,748.54 1721.41,621.27 1738.86,679.12 1756.32,609.70 1773.77,644.41 1791.22,667.55 1808.67,505.57 1826.12,690.69 1843.58,875.81 1861.03,887.38 1878.48,702.26 1895.93,609.70 1913.38,517.14 1932.00,1003.08" fill="none" stroke="#fb6a4a" stroke-width="3.2" stroke-linejoin="round"/>
<rect x="656.7" y="1072.3" width="1276" height="1.6" fill="#aab0b4"/>
<rect x="743.35" y="1072.5" width="1.5" height="9" fill="#4a5560"/>
<rect x="917.87" y="1072.5" width="1.5" height="9" fill="#4a5560"/>
<rect x="1092.39" y="1072.5" width="1.5" height="9" fill="#4a5560"/>
<rect x="1266.91" y="1072.5" width="1.5" height="9" fill="#4a5560"/>
<rect x="1441.43" y="1072.5" width="1.5" height="9" fill="#4a5560"/>
<rect x="1615.95" y="1072.5" width="1.5" height="9" fill="#4a5560"/>
<rect x="1790.47" y="1072.5" width="1.5" height="9" fill="#4a5560"/>
</svg>
<div class="t" style="left:721.54px;top:1085.29px;font-size:17.5px;line-height:17.5px;color:#1c2b34;letter-spacing:0.141px;">09:50</div>
<div class="t" style="left:896.17px;top:1085.29px;font-size:17.5px;line-height:17.5px;color:#1c2b34;letter-spacing:0.141px;">09:55</div>
<div class="t" style="left:1070.80px;top:1085.29px;font-size:17.5px;line-height:17.5px;color:#1c2b34;letter-spacing:0.141px;">10:00</div>
<div class="t" style="left:1245.42px;top:1085.29px;font-size:17.5px;line-height:17.5px;color:#1c2b34;letter-spacing:0.141px;">10:05</div>
<div class="t" style="left:1419.15px;top:1085.29px;font-size:17.5px;line-height:17.5px;color:#1c2b34;letter-spacing:0.366px;">10:10</div>
<div class="t" style="left:1593.78px;top:1085.29px;font-size:17.5px;line-height:17.5px;color:#1c2b34;letter-spacing:0.366px;">10:15</div>
<div class="t" style="left:1768.41px;top:1085.29px;font-size:17.5px;line-height:17.5px;color:#1c2b34;letter-spacing:0.141px;">10:20</div>
<div class="t" style="left:641.36px;top:1064.69px;font-size:17.5px;line-height:17.5px;color:#1c2b34;">0</div>
<div class="t" style="left:641.36px;top:1006.84px;font-size:17.5px;line-height:17.5px;color:#1c2b34;">5</div>
<div class="t" style="left:630.84px;top:948.99px;font-size:17.5px;line-height:17.5px;color:#1c2b34;letter-spacing:0.995px;">10</div>
<div class="t" style="left:630.84px;top:891.14px;font-size:17.5px;line-height:17.5px;color:#1c2b34;letter-spacing:0.995px;">15</div>
<div class="t" style="left:631.74px;top:833.29px;font-size:17.5px;line-height:17.5px;color:#1c2b34;letter-spacing:0.095px;">20</div>
<div class="t" style="left:631.74px;top:775.44px;font-size:17.5px;line-height:17.5px;color:#1c2b34;letter-spacing:0.095px;">25</div>
<div class="t" style="left:631.74px;top:717.59px;font-size:17.5px;line-height:17.5px;color:#1c2b34;letter-spacing:0.095px;">30</div>
<div class="t" style="left:631.74px;top:659.74px;font-size:17.5px;line-height:17.5px;color:#1c2b34;letter-spacing:0.095px;">35</div>
<div class="t" style="left:632.64px;top:601.89px;font-size:17.5px;line-height:17.5px;color:#1c2b34;letter-spacing:-0.805px;">40</div>
<div class="t" style="left:632.64px;top:544.04px;font-size:17.5px;line-height:17.5px;color:#1c2b34;letter-spacing:-0.805px;">45</div>
<div class="t" style="left:631.74px;top:486.19px;font-size:17.5px;line-height:17.5px;color:#1c2b34;letter-spacing:0.095px;">50</div>
<div class="t" style="left:631.74px;top:428.34px;font-size:17.5px;line-height:17.5px;color:#1c2b34;letter-spacing:0.095px;">55</div>
<div class="t" style="left:631.74px;top:370.49px;font-size:17.5px;line-height:17.5px;color:#1c2b34;letter-spacing:0.095px;">60</div>
<div class="b" style="left:655.5px;top:1121px;width:28.5px;height:28px;background:#fc9272;"></div>
<div class="b" style="left:844px;top:1121px;width:28.5px;height:28px;background:#de2d26;"></div>
<div class="t" style="left:698.12px;top:1125.72px;font-size:19px;line-height:19px;color:#1c2b34;letter-spacing:-0.452px;">success_login</div>
<div class="t" style="left:887.04px;top:1125.72px;font-size:19px;line-height:19px;color:#1c2b34;letter-spacing:0.160px;width:178.7px;height:30px;overflow:hidden;white-space:nowrap;">multifactor_auth_faile</div>
</body></html>
